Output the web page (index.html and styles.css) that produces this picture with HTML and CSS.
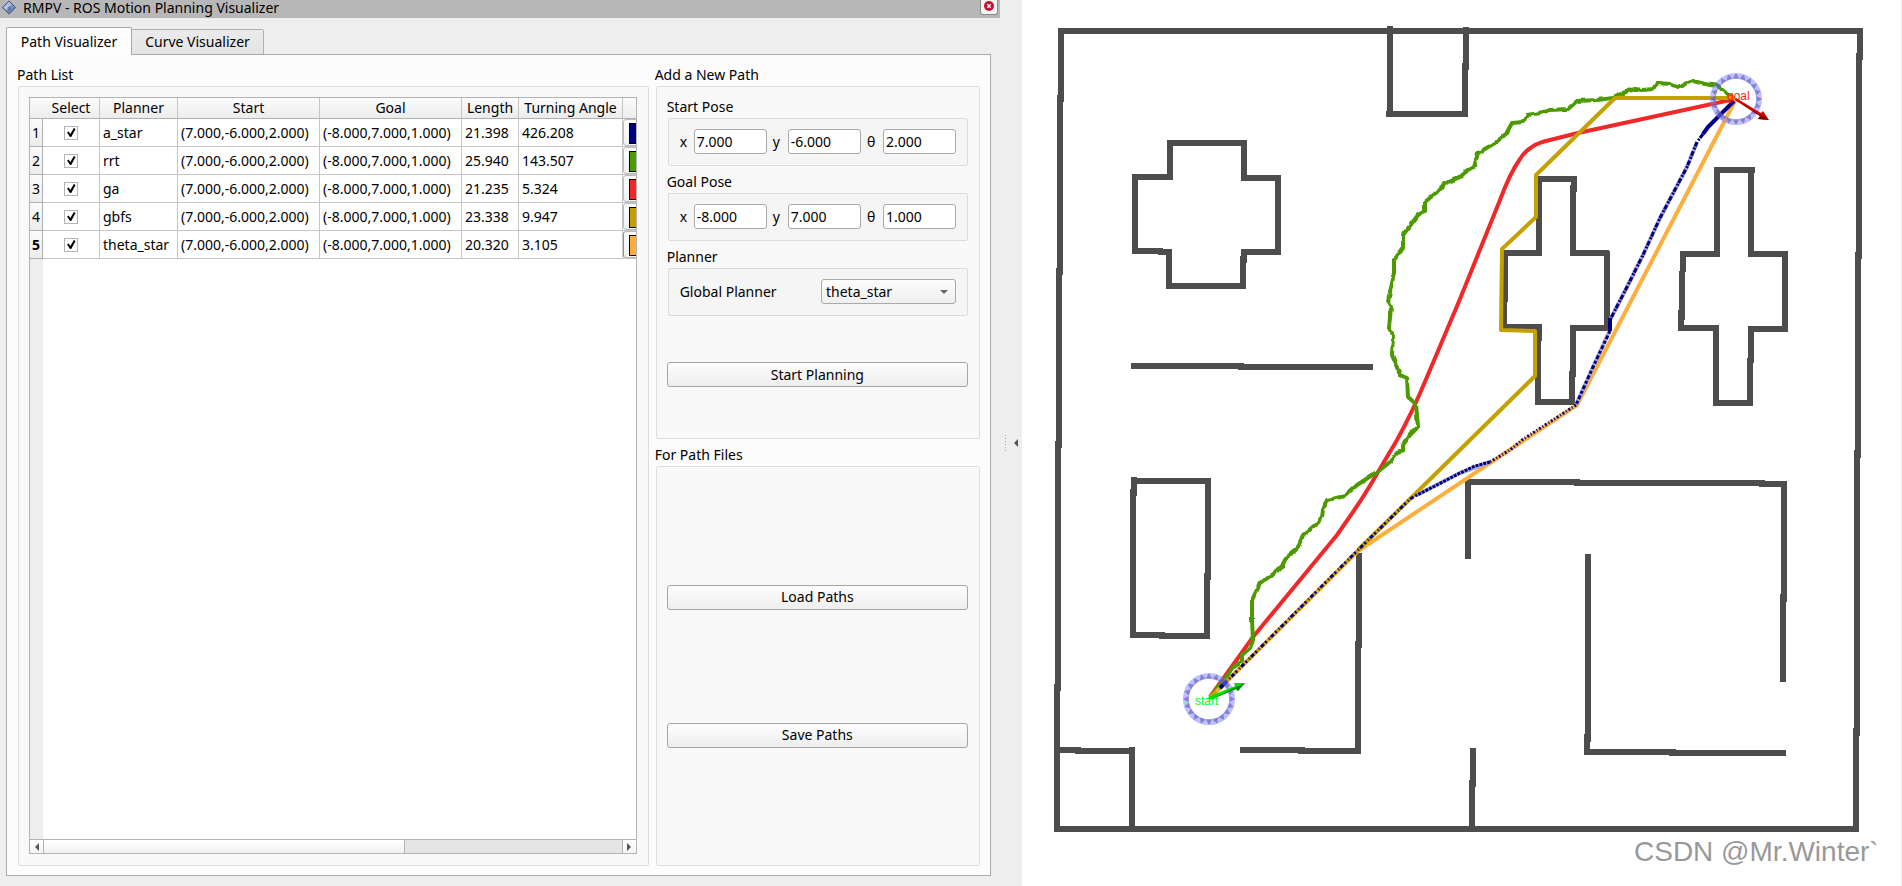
FILE: index.html
```html
<!DOCTYPE html>
<html lang="en">
<head>
<meta charset="utf-8">
<title>RMPV - ROS Motion Planning Visualizer</title>
<link rel="stylesheet" href="styles.css">
</head>
<body>
<div class="app">
  <section class="dock">
    <header class="titlebar">
      <svg class="app-icon" viewBox="0 0 16 16" aria-hidden="true">
        <path d="M8 0 16 8 8 16 0 8Z" fill="#3d5488"/>
        <path d="M8 1.5 14.500 8 8 14.500 1.500 8Z" fill="#7f95c4"/>
        <path d="M8 1.500 11 4.500 5 11 1.500 8Z" fill="#b4c2e2"/>
        <path d="M8 6 12 9 8 13 6 10Z" fill="#6279ad"/>
      </svg>
      <h1 class="title">RMPV - ROS Motion Planning Visualizer</h1>
      <button class="close" type="button" aria-label="Close">
        <svg viewBox="0 0 10 10"><circle cx="5" cy="5" r="5" fill="#c8102e"/><path d="M3.300 3.300 6.700 6.700M6.700 3.300 3.300 6.700" stroke="#fff" stroke-width="1.300"/></svg>
      </button>
    </header>
    <nav class="tabs">
      <button class="tab active" type="button">Path Visualizer</button>
      <button class="tab" type="button">Curve Visualizer</button>
    </nav>
    <main class="pane">
      <section class="group list-column">
        <h2 class="group-title">Path List</h2>
        <div class="group-box list-box">
          <div class="table-frame">
            <div class="viewport">
              <table class="paths">
                <colgroup><col class="c-index"><col class="c-select"><col class="c-planner"><col class="c-pose"><col class="c-pose"><col class="c-length"><col class="c-angle"><col class="c-color"></colgroup>
                <thead>
                  <tr><th class="corner"></th><th class="first">Select</th><th>Planner</th><th>Start</th><th>Goal</th><th>Length</th><th>Turning Angle</th><th></th></tr>
                </thead>
                <tbody>
                  <tr><th scope="row">1</th><td class="check"><input type="checkbox" checked aria-label="Select a_star"></td><td>a_star</td><td>(7.000,-6.000,2.000)</td><td>(-8.000,7.000,1.000)</td><td>21.398</td><td>426.208</td><td class="color"><button type="button" aria-label="Color of a_star"><span class="swatch navy"></span></button></td></tr>
                  <tr><th scope="row">2</th><td class="check"><input type="checkbox" checked aria-label="Select rrt"></td><td>rrt</td><td>(7.000,-6.000,2.000)</td><td>(-8.000,7.000,1.000)</td><td>25.940</td><td>143.507</td><td class="color"><button type="button" aria-label="Color of rrt"><span class="swatch green"></span></button></td></tr>
                  <tr><th scope="row">3</th><td class="check"><input type="checkbox" checked aria-label="Select ga"></td><td>ga</td><td>(7.000,-6.000,2.000)</td><td>(-8.000,7.000,1.000)</td><td>21.235</td><td>5.324</td><td class="color"><button type="button" aria-label="Color of ga"><span class="swatch red"></span></button></td></tr>
                  <tr><th scope="row">4</th><td class="check"><input type="checkbox" checked aria-label="Select gbfs"></td><td>gbfs</td><td>(7.000,-6.000,2.000)</td><td>(-8.000,7.000,1.000)</td><td>23.338</td><td>9.947</td><td class="color"><button type="button" aria-label="Color of gbfs"><span class="swatch gold"></span></button></td></tr>
                  <tr class="current"><th scope="row">5</th><td class="check"><input type="checkbox" checked aria-label="Select theta_star"></td><td>theta_star</td><td>(7.000,-6.000,2.000)</td><td>(-8.000,7.000,1.000)</td><td>20.320</td><td>3.105</td><td class="color"><button type="button" aria-label="Color of theta_star"><span class="swatch orange"></span></button></td></tr>
                </tbody>
              </table>
            </div>
            <div class="scrollbar">
              <button class="step" type="button" aria-label="Scroll left"><svg viewBox="0 0 4 8"><path d="M4 0V8L0 4Z"/></svg></button>
              <div class="track"><div class="thumb"></div></div>
              <button class="step right" type="button" aria-label="Scroll right"><svg viewBox="0 0 4 8"><path d="M0 0V8L4 4Z"/></svg></button>
            </div>
          </div>
        </div>
      </section>
      <div class="side-column">
        <section class="group">
          <h2 class="group-title">Add a New Path</h2>
          <div class="group-box form-box">
            <h3 class="group-title">Start Pose</h3>
            <div class="inner-box pose">
              <label for="sx">x</label><input id="sx" type="text" value="7.000">
              <label for="sy">y</label><input id="sy" type="text" value="-6.000">
              <label for="st">θ</label><input id="st" type="text" value="2.000">
            </div>
            <h3 class="group-title">Goal Pose</h3>
            <div class="inner-box pose">
              <label for="gx">x</label><input id="gx" type="text" value="-8.000">
              <label for="gy">y</label><input id="gy" type="text" value="7.000">
              <label for="gt">θ</label><input id="gt" type="text" value="1.000">
            </div>
            <h3 class="group-title">Planner</h3>
            <div class="inner-box planner">
              <label for="planner">Global Planner</label>
              <span class="select"><select id="planner"><option>a_star</option><option>rrt</option><option>ga</option><option>gbfs</option><option selected>theta_star</option></select></span>
            </div>
            <button class="push start" type="button">Start Planning</button>
          </div>
        </section>
        <section class="group files">
          <h2 class="group-title">For Path Files</h2>
          <div class="group-box files-box">
            <button class="push" type="button">Load Paths</button>
            <button class="push" type="button">Save Paths</button>
          </div>
        </section>
      </div>
    </main>
  </section>
  <div class="splitter">
    <span class="grip"></span>
    <svg class="collapse" viewBox="0 0 4 8" aria-hidden="true"><path d="M4 0V8L0 4Z"/></svg>
  </div>
  <section class="view">
    <svg class="map" viewBox="1022 0 880 886" role="img" aria-label="Planned paths on the map">
      <defs>
        <filter id="rough" x="-5%" y="-5%" width="110%" height="110%">
          <feTurbulence type="fractalNoise" baseFrequency="0.15" numOctaves="1" seed="4"/>
          <feDisplacementMap in="SourceGraphic" scale="4" xChannelSelector="R" yChannelSelector="G"/>
        </filter>
        <path id="tooth" d="M0-26 3-20.500H-3Z"/>
        <g id="quarter"><use href="#tooth"/><use href="#tooth" transform="rotate(18)"/><use href="#tooth" transform="rotate(36)"/><use href="#tooth" transform="rotate(54)"/><use href="#tooth" transform="rotate(72)"/></g>
        <g id="ring">
          <circle r="23" fill="none" stroke="#8080ff" stroke-opacity=".5" stroke-width="6"/>
          <g fill="#5050a8" fill-opacity=".55"><use href="#quarter"/><use href="#quarter" transform="rotate(90)"/><use href="#quarter" transform="rotate(180)"/><use href="#quarter" transform="rotate(270)"/></g>
        </g>
      </defs>
      <g fill="none" stroke="#4d4d4d" stroke-width="6" shape-rendering="crispEdges">
        <path d="M1058 31H1863M1061 28V102M1060 95V275M1059 268V448M1058 441V691M1057 684V832M1054 829H1859M1860 28V60M1859 53V259M1858 252V458M1857 450V736M1856 728V832"/>
        <path d="M1390 26V117M1386 114H1468M1466 27V70M1465 63V117"/>
        <path d="M1167 143H1247M1170 140V180M1173 177H1132M1135 174V254M1132 251H1163M1158 252H1172M1169 249V289M1166 286H1246M1243 256V289M1244 249V263M1241 252H1281M1278 175V255M1281 178H1241M1244 140V181"/>
        <path d="M1131 366H1244M1238 367H1373"/>
        <path d="M1131 481H1211M1134 477V496M1133 489V638M1130 635H1165M1159 636H1210M1208 478V580M1207 573V639"/>
        <path d="M1060 750H1081M1075 751H1135M1132 747V827M1240 750H1305M1298 751H1361M1359 553V648M1358 641V754M1473 748V787M1472 780V826"/>
        <path d="M1468 479V559M1465 482H1580M1574 483H1765M1759 484H1787M1784 481V602M1783 594V682M1588 554V742M1587 734V755M1584 752H1676M1669 753H1786"/>
        <path d="M1537 179H1577M1539 176V256M1503 253H1542M1505 250V302M1504 295V330M1503 327H1541M1539 324V341M1538 334V405M1535 402H1575M1572 371V405M1573 325V377M1570 328H1610M1607 251V331M1570 253H1609M1573 185V256M1574 176V192"/>
        <path d="M1714 170H1755M1717 167V257M1720 254H1680M1683 251V272M1682 271V320M1681 310V331M1678 328H1719M1716 325V406M1713 403H1753M1750 358V406M1751 326V363M1748 329H1788M1785 251V332M1788 254H1748M1751 167V257"/>
      </g>
      <g fill="none" stroke-linejoin="round">
        <path stroke="#ef2929" stroke-width="4" d="M1735 99 1578 133 1550 140Q1537 143 1532 147 1525 151 1520 159 1510 173 1500 200L1460 299 1427 377Q1412 413 1397 440L1378 472Q1366 493 1355 509L1337 535 1253 637 1210 697"/>
        <path stroke="#4e9a06" stroke-width="4" filter="url(#rough)" d="M1734 99 1728 95 1718 86 1705 84 1693 81 1677 87 1670 84 1657 83 1653 89 1643 90 1635 89 1623 93 1612 98 1597 100 1577 101 1568 109 1550 110 1540 113 1527 115 1523 122 1512 123 1506 134 1495 143 1478 153 1474 167 1467 171 1460 177 1444 184 1437 192 1425 202 1425 211 1418 215 1403 235 1403 247 1394 260 1394 273 1391 287 1388 302 1391 307 1389 328 1393 335 1392 355 1400 375 1407 378 1408 397 1416 404 1418 427 1410 435 1403 445 1403 451 1397 453 1390 462 1380 470 1357 485 1345 496 1327 500 1323 510 1322 517 1315 525 1303 535 1297 549 1287 557 1283 565 1275 573 1260 583 1252 600 1252 620 1253 640 1250 648 1242 655 1242 662 1232 668 1228 675 1222 682 1211 697"/>
        <path stroke="#fcaf3e" stroke-width="4" d="M1736 99 1577 405 1358 551 1210 698"/>
        <path stroke="#c4a000" stroke-width="4" d="M1735 98H1615L1536 175V217L1502 249 1501 330 1535 331V376L1410 499 1358 550"/>
        <path stroke="#c4a000" stroke-width="3" stroke-dasharray="7 3" d="M1358 550 1210 698"/>
        <path stroke="#a8a8d0" stroke-width="4" d="M1697 142 1687 167 1660 218 1643 255 1627 287 1610 320M1610 330 1593 367 1576 405M1490 462 1460 473 1417 495"/>
        <g stroke="#000080">
          <path stroke-width="4" d="M1734 101 1708 127 1703 134M1610 318V331M1227 681 1220 688"/>
          <path stroke-width="3" stroke-dasharray="5 1 2 2" d="M1703 134 1697 142 1687 167 1660 218 1643 255 1627 287 1610 320"/>
          <path stroke-width="3" stroke-dasharray="3 2 4 2" d="M1610 331 1593 367 1576 405"/>
          <path stroke-width="3" stroke-dasharray="2 2 1 2" d="M1576 405 1522 440 1510 450 1490 462"/>
          <path stroke-width="3" stroke-dasharray="3 1" d="M1490 462 1475 466 1460 473 1435 486 1417 495"/>
          <path stroke-width="3" stroke-dasharray="2 2 4 2 1 3" d="M1417 495 1410 499 1358 550 1227 681"/>
        </g>
      </g>
      <use href="#ring" x="1736" y="99"/>
      <use href="#ring" x="1209" y="699"/>
      <text class="marker goal" x="1727" y="100">goal</text>
      <text class="marker begin" x="1195" y="705">start</text>
      <path d="M1736 98 1761 113 1763 111 1769 120 1758 119 1760 116 1735 100Z" fill="#d40000"/>
      <path d="M1735 100 1760 116 1758 119 1769 120 1765 117 1762 116Z" fill="#800000"/>
      <path d="M1208 697 1235 686 1234 683 1245 683 1238 691 1236 689 1210 700Z" fill="#00e000"/>
      <path d="M1210 700 1236 689 1238 691 1245 683 1236 687Z" fill="#008a00"/>
      <text class="watermark" x="1634" y="861">CSDN @Mr.Winter`</text>
    </svg>
  </section>
</div>
</body>
</html>
```
FILE: styles.css
```css
* { box-sizing: border-box; }
body {
  margin: 0;
  background: #eee;
  color: #000;
  font: 14px/20px "Noto Sans", "Open Sans", sans-serif;
}
button, input, select { font: inherit; color: inherit; }
h1, h2, h3 { margin: 0; font-size: inherit; font-weight: 400; }

.app { display: flex; min-height: 100vh; }
.dock { flex: 1000 1 0; min-width: 0; display: flex; flex-direction: column; padding-bottom: 10px; }

.titlebar { display: flex; align-items: flex-start; height: 18px; padding-left: 2px; background: #b7b7b7; }
.app-icon { width: 14px; height: 15px; }
.title { flex: 1; margin-left: 7px; line-height: 16px; }
.close { width: 18px; height: 15px; margin-right: 2px; padding: 0; border: 1px solid #888; border-top: 0; border-radius: 0 0 3px 3px; background: #f4f4f4; display: flex; justify-content: center; }
.close svg { width: 10px; height: 10px; margin-top: 1px; }

.tabs { display: flex; align-items: flex-end; margin: 9px 0 -1px 6px; height: 28px; }
.tab { height: 26px; flex: 0 0 132px; padding: 0; border: 1px solid #b0b0b0; border-left: 0; border-radius: 0 2px 0 0; background: linear-gradient(#ebebeb, #e4e4e4); }
.tab.active { height: 28px; flex-basis: 126px; border: 1px solid #aaa; border-bottom: 0; border-radius: 2px 2px 0 0; background: #fdfdfd; position: relative; }

.pane { flex: 1; display: flex; gap: 7px; margin: 0 9px 0 6px; padding: 4px 10px 9px 11px; border: 1px solid #aaa; background: #fcfcfc; }
.group { display: flex; flex-direction: column; }
.list-column { flex: 632 1 0; min-width: 0; }
.side-column { flex: 325 1 0; min-width: 0; display: flex; flex-direction: column; }
.group-title { height: 27px; padding-top: 6px; margin-left: -1px; }
.group-box { border: 1px solid #dedede; border-radius: 2px; background: #f9f9f9; }
.list-box { flex: 1; display: flex; padding: 10px 11px 11px 10px; }
.table-frame { flex: 1; min-width: 0; display: flex; flex-direction: column; border: 1px solid #b4b4b4; background: #fff; }
.viewport { flex: 1; overflow: hidden; background: linear-gradient(90deg, #eee 13px, #fff 13px); }

.paths { width: 910px; table-layout: fixed; border-collapse: separate; border-spacing: 0; }
.c-index { width: 13px; }
.c-select, .c-length { width: 57px; }
.c-planner { width: 78px; }
.c-pose { width: 142px; }
.c-angle { width: 104px; }
.c-color { width: 317px; }
.paths th, .paths td { height: 28px; padding: 0 3px; border: 0 solid #c6c6c6; border-width: 0 1px 1px 0; white-space: nowrap; text-align: left; font-weight: 400; }
.paths thead th { height: 21px; padding: 0; text-align: center; background: linear-gradient(#fcfcfc, #ececec); border-bottom-color: #b0b0b0; }
.paths thead .corner { border-right: 0; }
.paths tbody th { padding: 0; text-align: center; background: linear-gradient(#fafafa, #ececec); border-color: #b0b0b0; }
.paths .current th { font-weight: 700; }
.paths .check { padding: 0; text-align: center; }
.check input { appearance: none; display: block; width: 14px; height: 14px; margin: 0 auto; border: 1px solid #b4b4b4; background: #fff; }
.check input:checked::before { content: ""; display: block; width: 12px; height: 12px; background: #000; clip-path: polygon(17% 50%, 30% 42%, 44% 62%, 74% 12%, 88% 20%, 52% 88%, 42% 88%); }
.paths .color { padding: 0; }
.color button { display: block; width: 100%; height: 27px; padding: 3px 5px; border: 1px solid #bbb; border-radius: 3px; background: linear-gradient(#fff, #f0f0f0); }
.current .color button { border-left-color: #6f9cc0; }
.swatch { display: block; height: 21px; border: 1px solid #000; }
.navy { background: #000080; }
.green { background: #4e9a06; }
.red { background: #ef2929; }
.gold { background: #c4a000; }
.orange { background: #fcaf3e; }

.scrollbar { display: flex; height: 14px; border-top: 1px solid #b4b4b4; }
.step { width: 14px; padding: 0; border: 0; border-right: 1px solid #b4b4b4; background: linear-gradient(#fff, #f3f3f3); display: flex; align-items: center; justify-content: center; }
.step.right { border-right: 0; border-left: 1px solid #b4b4b4; }
.step svg { width: 4px; height: 8px; fill: #555; }
.track { flex: 1; background: #e5e5e5; }
.thumb { width: 62.5%; height: 100%; border-right: 1px solid #b4b4b4; background: linear-gradient(#fff, #f1f1f1); }

.form-box { padding: 4px 11px 51px; display: flex; flex-direction: column; }
.inner-box { height: 48px; padding: 10px 11px 11px; border: 1px solid #dcdcdc; border-radius: 2px; background: #f5f5f5; display: flex; align-items: center; }
.pose { display: grid; grid-template-columns: 8px 1fr 9px 1fr 10px 1fr; column-gap: 6px; }
.pose input { width: 100%; min-width: 0; height: 25px; padding: 0 2px; border: 1px solid #aaa; border-radius: 3px; background: #fff; }
.planner { justify-content: space-between; }
.select { position: relative; width: 135px; }
.select::after { content: ""; position: absolute; right: 8px; top: 11px; border: 4px solid transparent; border-top-color: #666; border-bottom: 0; pointer-events: none; }
.select select { appearance: none; display: block; width: 100%; height: 25px; padding: 0 4px; border: 1px solid #aaa; border-radius: 3px; background: linear-gradient(#fdfdfd, #efefef); }
.push { height: 25px; padding: 0; margin-left: -1px; border: 1px solid #a6a6a6; border-radius: 3px; background: linear-gradient(#fdfdfd, #eee); }
.start { margin-top: 46px; }
.files { flex: 1; }
.files-box { flex: 1; padding: 0 11px; display: flex; flex-direction: column; justify-content: center; gap: 113px; }

.splitter { flex: 22 1 0; min-width: 0; display: flex; align-items: center; justify-content: center; gap: 8px; }
.grip { width: 1px; height: 17px; background: repeating-linear-gradient(#aaa 0 1px, transparent 1px 3px); }
.collapse { width: 4px; height: 8px; fill: #555; }

.view { flex: 880 1 0; min-width: 0; background: #fff; box-shadow: inset -1px 0 #eee; }
.map { display: block; width: 100%; }
.marker { font: 12px "Liberation Sans", Arial, sans-serif; }
.goal { fill: #ff2020; }
.begin { fill: #0f0; }
.watermark { font: 28px "Liberation Sans", Arial, sans-serif; fill: #999; }
```
